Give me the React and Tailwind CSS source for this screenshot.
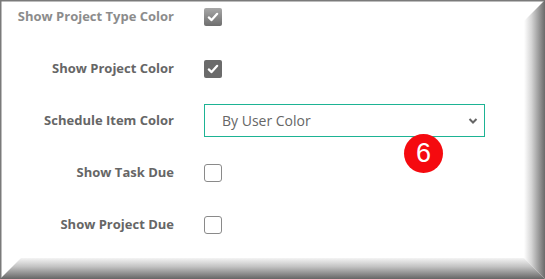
import React from 'react';

const labelFont = { fontFamily: '"Open Sans", "Liberation Sans", sans-serif' };

// Bevelled frame drawn around the settings panel
const Frame = () => (
  <svg className="absolute inset-0 pointer-events-none" width="545" height="279" viewBox="0 0 545 279">
    <defs>
      <linearGradient id="bevelRight" x1="0" y1="0" x2="1" y2="0">
        <stop offset="0" stopColor="#ffffff" />
        <stop offset="0.35" stopColor="#d6d6d6" />
        <stop offset="1" stopColor="#6a6a6a" />
      </linearGradient>
      <linearGradient id="bevelBottom" x1="0" y1="0" x2="0" y2="1">
        <stop offset="0" stopColor="#f4f4f4" />
        <stop offset="0.4" stopColor="#c4c4c4" />
        <stop offset="1" stopColor="#666666" />
      </linearGradient>
    </defs>
    <rect x="0" y="0" width="545" height="1.5" fill="#7a7a7a" />
    <rect x="0" y="0" width="1.5" height="279" fill="#7a7a7a" />
    <polygon points="524,21 545,0 545,279 524,258" fill="url(#bevelRight)" />
    <polygon points="0,279 21,258 524,258 545,279" fill="url(#bevelBottom)" />
  </svg>
);

const Checkbox = ({ checked, faded }) => {
  if (!checked) {
    return <span className="block w-[18px] h-[18px] rounded-[3px] border border-[#8a8a8a] bg-white" />;
  }
  return (
    <span
      className={`flex items-center justify-center w-[18px] h-[18px] rounded-[2px] ${
        faded ? 'bg-gradient-to-b from-[#a8a8a8] to-[#6e6e6e]' : 'bg-[#6b6b6b]'
      }`}
    >
      <svg width="12" height="12" viewBox="0 0 12 12">
        <path d="M1.8 6.4 L4.6 9.1 L10.2 2.8" fill="none" stroke="#fff" strokeWidth="2.2" strokeLinecap="round" strokeLinejoin="round" />
      </svg>
    </span>
  );
};

const Row = ({ label, faded, children }) => (
  <div className="flex items-center h-[33px]">
    <span
      className={`w-[174px] text-right text-[13px] font-bold ${faded ? 'text-[#8c8c8c]' : 'text-[#666666]'}`}
      style={labelFont}
    >
      {label}
    </span>
    <div className="ml-[30px] flex items-center">{children}</div>
  </div>
);

export default function App() {
  return (
    <div className="relative w-[545px] h-[279px] bg-white overflow-hidden">
      <div className="flex flex-col gap-[19px]">
        <Row label="Show Project Type Color" faded>
          <Checkbox checked faded />
        </Row>
        <Row label="Show Project Color">
          <Checkbox checked />
        </Row>
        <Row label="Schedule Item Color">
          <div className="relative w-[281px] h-[33px] border border-[#1db394] bg-white flex items-center pl-[17px]">
            <span className="text-[14px] text-[#666666]" style={labelFont}>
              By User Color
            </span>
            <svg className="absolute right-[6px] top-[12px]" width="10" height="8" viewBox="0 0 10 8">
              <path d="M1.5 2 L5 5.5 L8.5 2" fill="none" stroke="#666" strokeWidth="2" />
            </svg>
          </div>
        </Row>
        <Row label="Show Task Due">
          <Checkbox />
        </Row>
        <Row label="Show Project Due">
          <Checkbox />
        </Row>
      </div>

      {/* numbered callout badge */}
      <div
        className="absolute left-[404px] top-[134px] w-[39px] h-[39px] rounded-full bg-[#f50a0f] flex items-center justify-center text-white text-[27px] leading-none"
        style={{ fontFamily: '"Liberation Sans", Arial, sans-serif' }}
      >
        6
      </div>

      <Frame />
    </div>
  );
}
